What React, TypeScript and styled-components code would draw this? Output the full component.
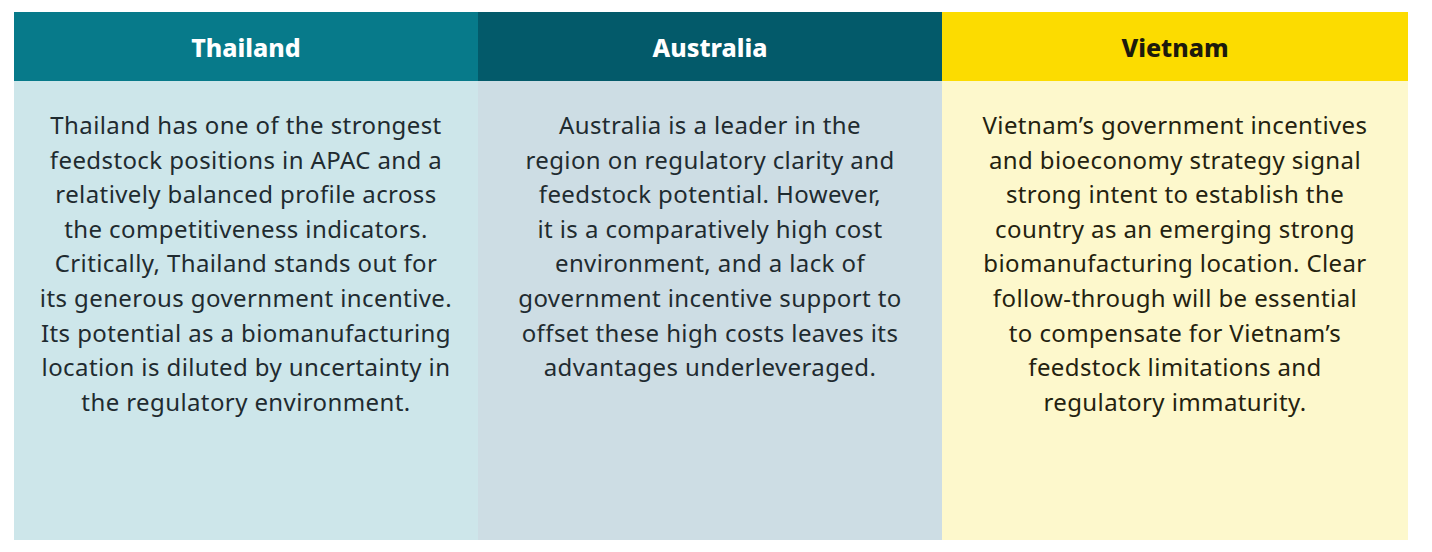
import React from 'react'
import styled, { createGlobalStyle } from 'styled-components'

const GlobalStyle = createGlobalStyle`
  html, body {
    margin: 0;
    padding: 0;
    background: #ffffff;
  }
  body {
    font-family: "Noto Sans", "Open Sans", sans-serif;
  }
`

type Tone = 'teal' | 'navy' | 'yellow'

const palette: Record<Tone, { head: string; headText: string; body: string; bodyText: string }> = {
  teal: { head: '#077a8a', headText: '#ffffff', body: '#cde6ea', bodyText: '#1f2b30' },
  navy: { head: '#035a6a', headText: '#ffffff', body: '#cddde4', bodyText: '#1f2b30' },
  yellow: { head: '#fcdc00', headText: '#1c1a0c', body: '#fdf8cc', bodyText: '#24220f' },
}

const Page = styled.div`
  padding: 12px 24px 12px 14px;
`

const Table = styled.div`
  display: grid;
  grid-template-columns: 464px 464px 466px;
  width: 1394px;
`

const Column = styled.section`
  display: flex;
  flex-direction: column;
`

const Header = styled.div<{ $tone: Tone }>`
  height: 69px;
  display: flex;
  align-items: center;
  justify-content: center;
  background: ${({ $tone }) => palette[$tone].head};
  color: ${({ $tone }) => palette[$tone].headText};
  font-size: 25px;
  font-weight: 800;
`

const Body = styled.div<{ $tone: Tone }>`
  height: 459px;
  box-sizing: border-box;
  padding-top: 27px;
  background: ${({ $tone }) => palette[$tone].body};
  color: ${({ $tone }) => palette[$tone].bodyText};
  text-align: center;
  font-size: 24px;
  letter-spacing: 0.4px;
  line-height: 34.6px;
  white-space: nowrap;
`

const Line = styled.div``

const columns: { tone: Tone; title: string; lines: string[] }[] = [
  {
    tone: 'teal',
    title: 'Thailand',
    lines: [
      'Thailand has one of the strongest',
      'feedstock positions in APAC and a',
      'relatively balanced profile across',
      'the competitiveness indicators.',
      'Critically, Thailand stands out for',
      'its generous government incentive.',
      'Its potential as a biomanufacturing',
      'location is diluted by uncertainty in',
      'the regulatory environment.',
    ],
  },
  {
    tone: 'navy',
    title: 'Australia',
    lines: [
      'Australia is a leader in the',
      'region on regulatory clarity and',
      'feedstock potential. However,',
      'it is a comparatively high cost',
      'environment, and a lack of',
      'government incentive support to',
      'offset these high costs leaves its',
      'advantages underleveraged.',
    ],
  },
  {
    tone: 'yellow',
    title: 'Vietnam',
    lines: [
      'Vietnam\u2019s government incentives',
      'and bioeconomy strategy signal',
      'strong intent to establish the',
      'country as an emerging strong',
      'biomanufacturing location. Clear',
      'follow-through will be essential',
      'to compensate for Vietnam\u2019s',
      'feedstock limitations and',
      'regulatory immaturity.',
    ],
  },
]

export default function App() {
  return (
    <>
      <GlobalStyle />
      <Page>
        <Table>
          {columns.map((col) => (
            <Column key={col.title}>
              <Header $tone={col.tone}>{col.title}</Header>
              <Body $tone={col.tone}>
                {col.lines.map((line) => (
                  <Line key={line}>{line}</Line>
                ))}
              </Body>
            </Column>
          ))}
        </Table>
      </Page>
    </>
  )
}
